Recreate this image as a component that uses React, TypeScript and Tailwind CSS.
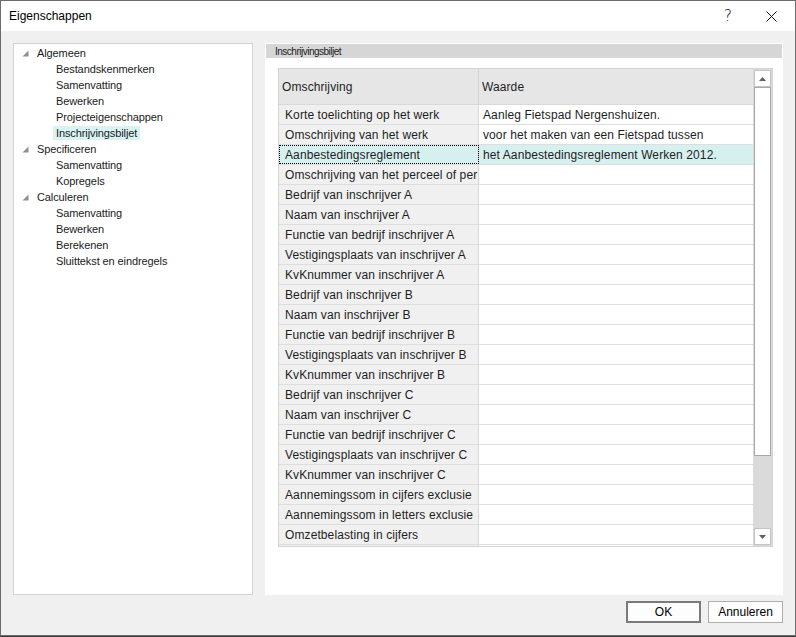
import React from "react";

const tree = [
  { label: "Algemeen", children: ["Bestandskenmerken", "Samenvatting", "Bewerken", "Projecteigenschappen", "Inschrijvingsbiljet"] },
  { label: "Specificeren", children: ["Samenvatting", "Kopregels"] },
  { label: "Calculeren", children: ["Samenvatting", "Bewerken", "Berekenen", "Sluittekst en eindregels"] },
];

// labels are cut where the grid cuts them in the dialog
const rows: [string, string][] = [
  ["Korte toelichting op het werk", "Aanleg Fietspad Nergenshuizen."],
  ["Omschrijving van het werk", "voor het maken van een Fietspad tussen"],
  ["Aanbestedingsreglement", "het Aanbestedingsreglement Werken 2012."],
  ["Omschrijving van het perceel of per", ""],
  ["Bedrijf van inschrijver A", ""],
  ["Naam van inschrijver A", ""],
  ["Functie van bedrijf inschrijver A", ""],
  ["Vestigingsplaats van inschrijver A", ""],
  ["KvKnummer van inschrijver A", ""],
  ["Bedrijf van inschrijver B", ""],
  ["Naam van inschrijver B", ""],
  ["Functie van bedrijf inschrijver B", ""],
  ["Vestigingsplaats van inschrijver B", ""],
  ["KvKnummer van inschrijver B", ""],
  ["Bedrijf van inschrijver C", ""],
  ["Naam van inschrijver C", ""],
  ["Functie van bedrijf inschrijver C", ""],
  ["Vestigingsplaats van inschrijver C", ""],
  ["KvKnummer van inschrijver C", ""],
  ["Aannemingssom in cijfers exclusie", ""],
  ["Aannemingssom in letters exclusie", ""],
  ["Omzetbelasting in cijfers", ""],
  ["", ""],
];

function Expander() {
  return (
    <svg width="7" height="7" viewBox="0 0 7 7" className="shrink-0">
      <polygon points="6.5,0.5 6.5,6.5 0.5,6.5" fill="#8f8f8f" />
    </svg>
  );
}

function Arrow({ up }: { up?: boolean }) {
  return (
    <svg width="7" height="4" viewBox="0 0 7 4">
      {up ? <polygon points="3.5,0 7,4 0,4" fill="#606060" /> : <polygon points="0,0 7,0 3.5,4" fill="#606060" />}
    </svg>
  );
}

export default function App() {
  return (
    <div className="w-[796px] h-[637px] bg-[#3a3a3a] font-['Liberation_Sans',Arial,sans-serif]">
      <div className="w-[796px] h-[636px] flex flex-col border border-[#6b6b6b] bg-[#f0f0f0]">
        {/* title bar */}
        <div className="h-[30px] bg-white flex items-center pl-[8px] text-[12px] text-black">
          <span>Eigenschappen</span>
          <span className="ml-auto mr-[34px] text-[15px] font-['DejaVu_Sans',sans-serif] font-light leading-none">?</span>
          <svg width="11" height="11" viewBox="0 0 11 11" className="mr-[18px]">
            <path d="M0.5 0.5 L10.5 10.5 M10.5 0.5 L0.5 10.5" stroke="#111" strokeWidth="1" />
          </svg>
        </div>

        {/* body */}
        <div className="flex-1 flex flex-col px-[12px] pt-[12px] pb-[12px]">
          <div className="flex gap-[12px] h-[552px]">
            {/* tree */}
            <div className="w-[240px] shrink-0 bg-white border border-[#d2d2d2] pt-px text-[11px] tracking-[-0.1px] text-[#1a1a1a]">
              {tree.map((g) => (
                <div key={g.label}>
                  <div className="h-[16px] flex items-center pl-[8px]">
                    <Expander />
                    <span className="ml-[8px]">{g.label}</span>
                  </div>
                  {g.children.map((c) => (
                    <div key={c} className="h-[16px] flex items-center pl-[39px]">
                      <span className={c === "Inschrijvingsbiljet" ? "bg-[#d9f3f3] px-[3px] leading-[14px]" : "px-[3px]"}>{c}</span>
                    </div>
                  ))}
                </div>
              ))}
            </div>

            {/* right panel */}
            <div className="flex-1 bg-white p-px flex flex-col">
              <div className="h-[14px] bg-[#d6d6d6] flex items-center pl-[9px] text-[10px] tracking-[-0.5px] text-[#222]">
                Inschrijvingsbiljet
              </div>
              <div className="ml-[12px] mt-[10px] w-[495px] h-[479px] border border-[#d4d4d4] flex overflow-hidden text-[12px] tracking-[0.1px] text-[#1e1e1e]">
                <div className="w-[474px] flex flex-col overflow-hidden">
                  <div className="h-[36px] shrink-0 flex bg-[#e6e6e6] border-b border-[#d9d9d9]">
                    <div className="w-[200px] border-r border-[#d4d4d4] flex items-center pl-[3px]">Omschrijving</div>
                    <div className="flex-1 flex items-center pl-[3px]">Waarde</div>
                  </div>
                  {rows.map(([k, v], i) => {
                    const sel = k === "Aanbestedingsreglement";
                    return (
                      <div key={i} className="h-[20px] shrink-0 flex border-b border-[#dedede]">
                        <div
                          className={
                            "w-[200px] shrink-0 border-r border-[#d9d9d9] flex items-center whitespace-nowrap overflow-hidden pl-[6px] " +
                            (sel ? "bg-[#d6f0f0] outline outline-1 outline-dotted outline-black -outline-offset-1" : "bg-[#f0f0f0]")
                          }
                        >
                          {k}
                        </div>
                        <div className={"flex-1 flex items-center pl-[4px] whitespace-nowrap overflow-hidden " + (sel ? "bg-[#d6f0f0]" : "bg-white")}>
                          {v}
                        </div>
                      </div>
                    );
                  })}
                </div>
                {/* scrollbar */}
                <div className="w-[19px] bg-[#dadada] pt-px pl-px pr-px flex flex-col">
                  <div className="h-[17px] shrink-0 bg-white border border-[#c4c4c4] flex items-center justify-center">
                    <Arrow up />
                  </div>
                  <div className="h-[369px] shrink-0 bg-white border border-[#a8a8a8]" />
                  <div className="flex-1" />
                  <div className="h-[17px] shrink-0 bg-white border border-[#c4c4c4] flex items-center justify-center mb-[1px]">
                    <Arrow />
                  </div>
                </div>
              </div>
            </div>
          </div>

          {/* buttons */}
          <div className="mt-[6px] flex justify-end gap-[7px] text-[12px] text-black">
            <button className="w-[75px] h-[22px] bg-[#fdfdfd] border-2 border-[#7a7a7a] flex items-center justify-center">OK</button>
            <button className="w-[75px] h-[22px] bg-[#fdfdfd] border border-[#adadad] flex items-center justify-center">Annuleren</button>
          </div>
        </div>
      </div>
    </div>
  );
}
